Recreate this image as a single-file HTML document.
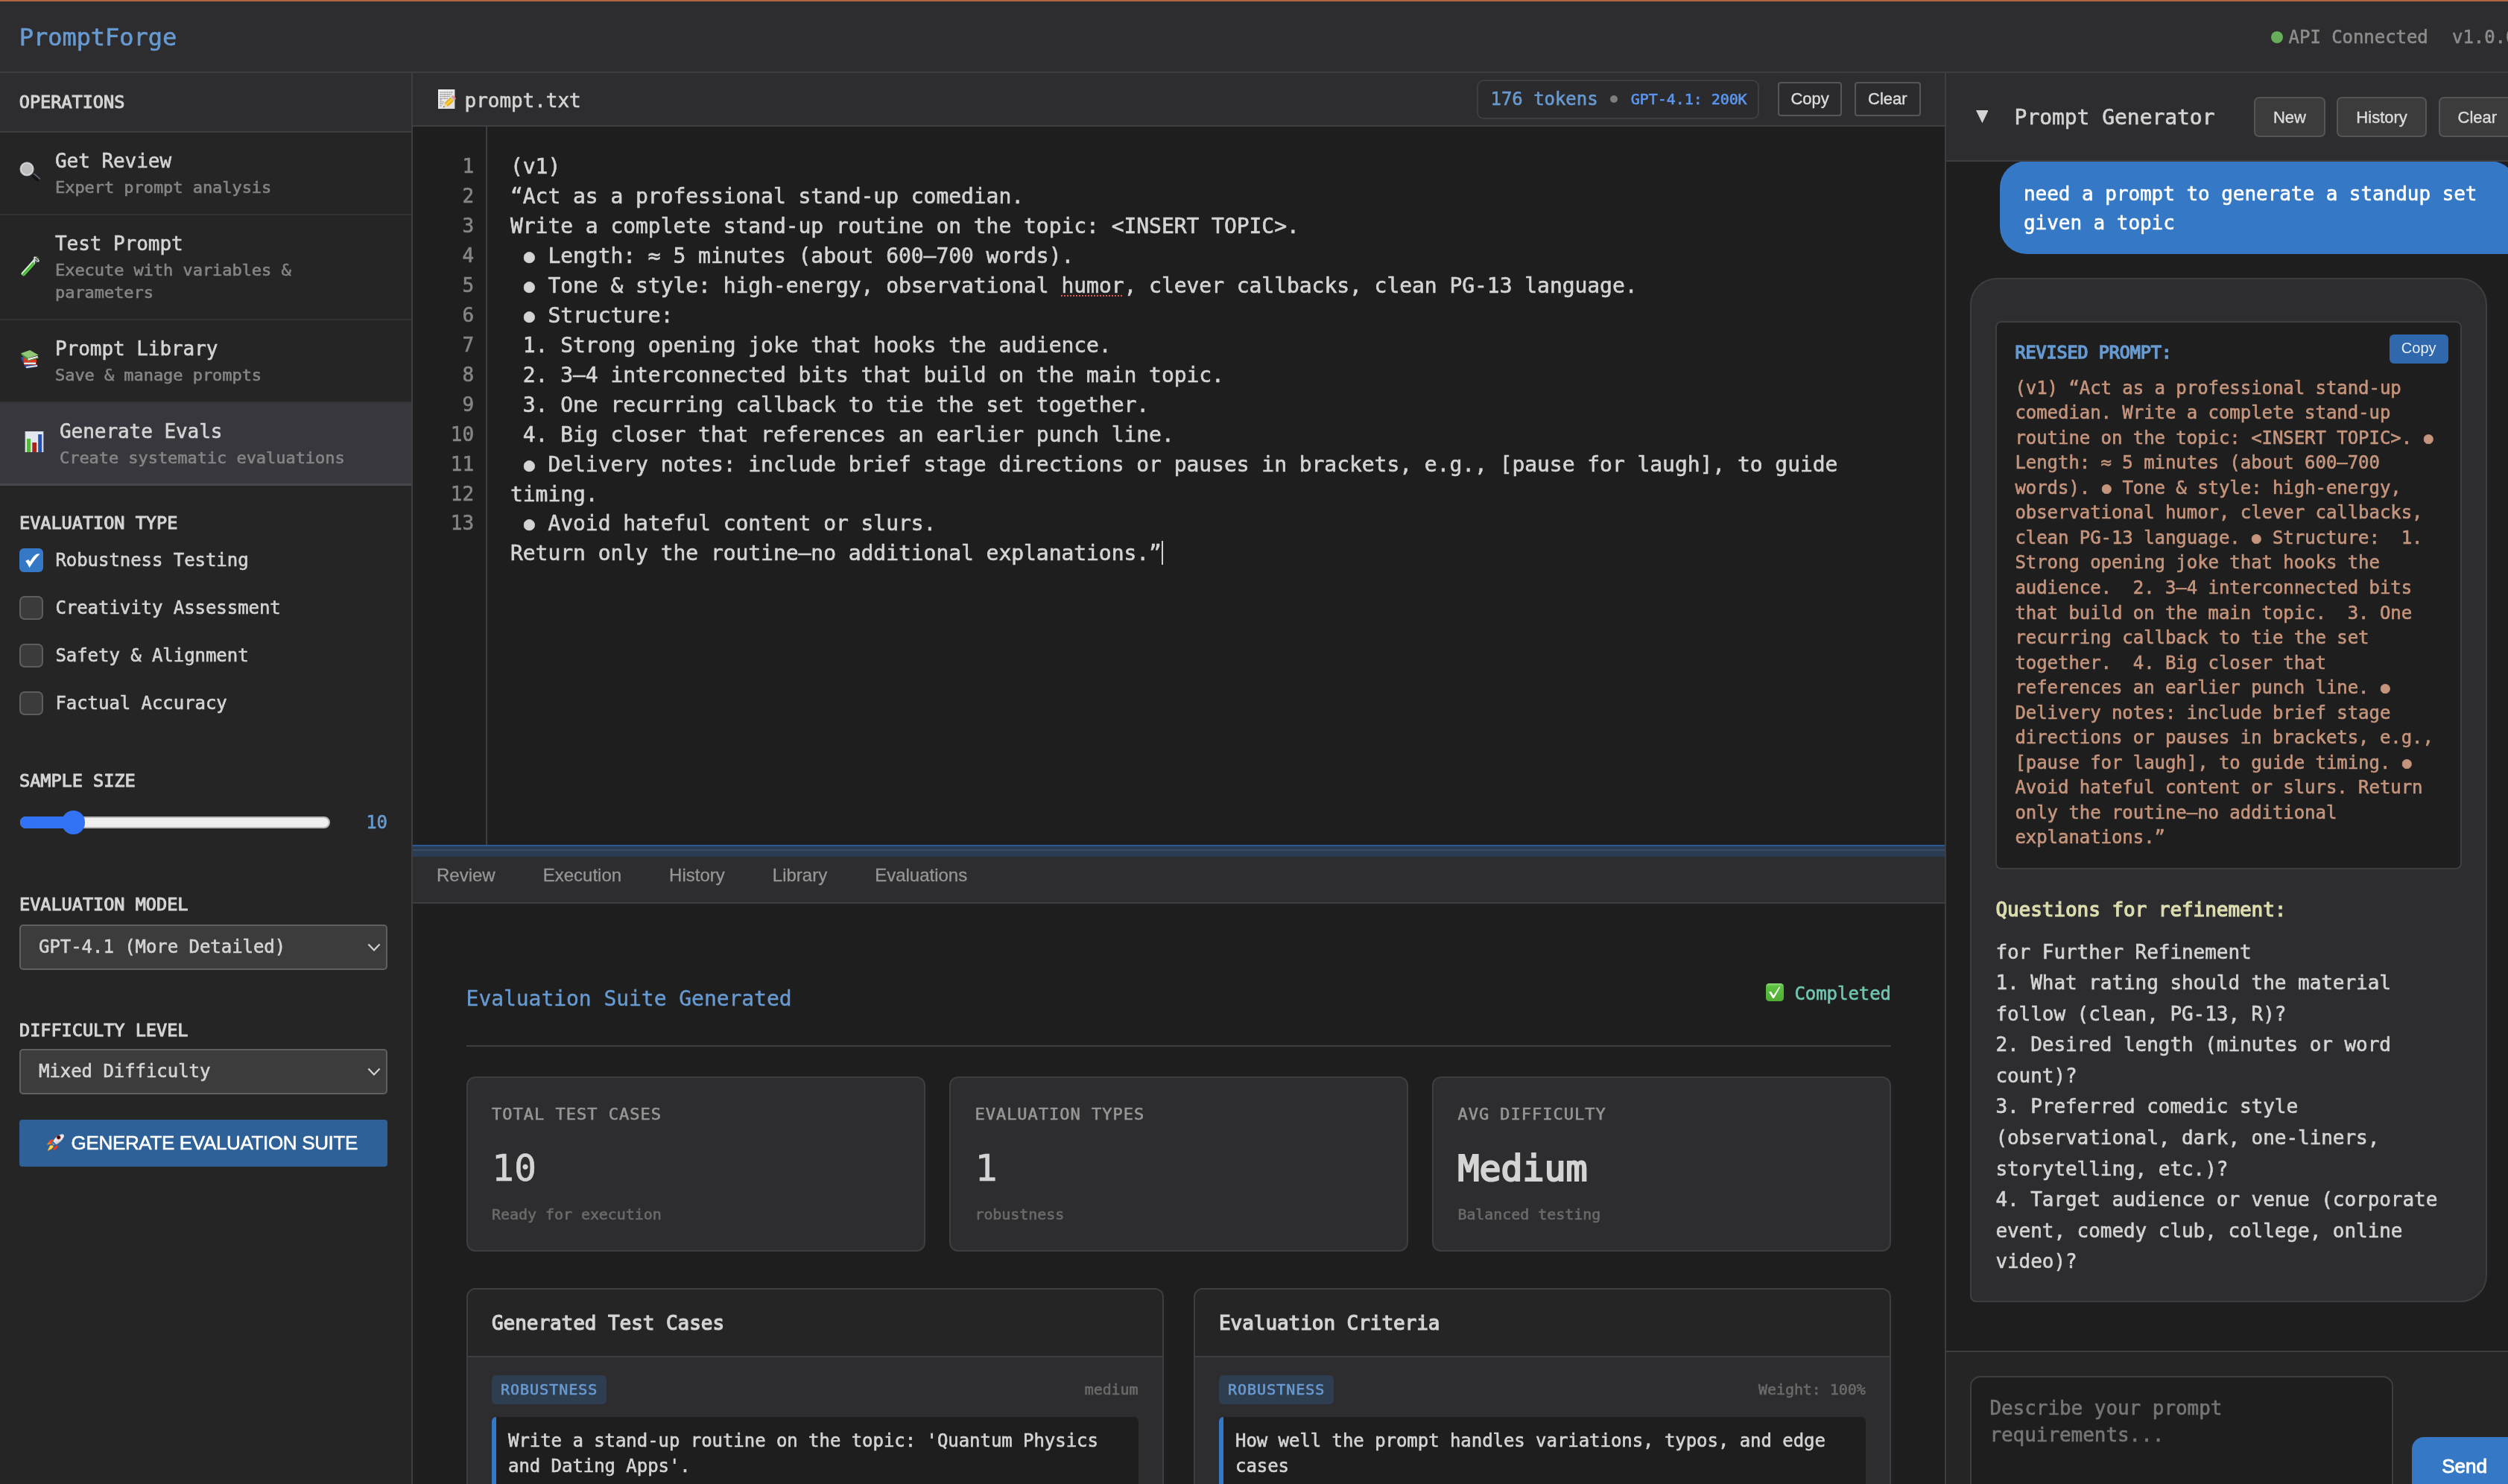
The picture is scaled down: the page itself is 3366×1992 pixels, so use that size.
<!DOCTYPE html>
<html lang="en">
<head>
<meta charset="utf-8">
<title>PromptForge</title>
<style>
*{box-sizing:border-box;margin:0;padding:0}
html{zoom:2;background:#1e1e1e;overflow:hidden}
body{will-change:transform;width:1683px;height:996px;overflow:hidden;position:relative;background:#1e1e1e;color:#d4d4d4;
 font-family:"DejaVu Sans Mono","Liberation Mono",monospace;font-size:13px;letter-spacing:-0.002em;-webkit-text-stroke-width:0.3px}
.sans{font-family:"Liberation Sans",sans-serif;letter-spacing:0;-webkit-text-stroke-width:0}
.abs{position:absolute}
svg{display:block}
/* header */
#hdr{position:absolute;left:0;top:0;width:1683px;height:49px;background:#2d2d30;border-bottom:1px solid #3e3e42;border-top:1px solid #b0663e}
#logo{position:absolute;left:12.9px;top:.6px;height:48px;line-height:47px;font-size:16px;color:#679ad1}
#status{position:absolute;left:1524px;top:.5px;height:48px;line-height:47px;font-size:12px;color:#8c8c8c;white-space:nowrap}
#status .dot{position:absolute;left:0;top:19.6px;width:8px;height:8px;border-radius:50%;background:#67ad5b}
/* sidebar */
#side{position:absolute;left:0;top:49px;width:277px;height:947px;background:#252526;border-right:1px solid #3e3e42}
.sechdr{height:40px;background:#2d2d30;border-bottom:1px solid #3e3e42;padding-left:12.9px;line-height:39px;font-size:11.8px;color:#d4d4d4;-webkit-text-stroke-width:0.5px}
.op{display:flex;align-items:center;padding:10px 12px 10px 13px;border-bottom:1px solid #333337}
.op .ic{width:14px;height:14px;margin-right:10px;flex:none;position:relative;top:-.7px}
.op .t{font-size:13px;line-height:16.9px;color:#d4d4d4;margin-bottom:2px;position:relative;top:1px}
.op .d{font-size:11px;line-height:15.4px;color:#858585;position:relative;top:.6px}
.op.active{background:#37373d;padding-left:16px;border-bottom:1.5px solid #45454b}
.lbl{margin-top:.8px;font-size:11.8px;color:#d4d4d4;-webkit-text-stroke-width:0.5px;line-height:15.6px}
.cb{position:absolute;left:13px;width:16px;height:16px;border-radius:3.5px;background:#3b3b3b;border:1px solid #5e5e5e}
.cb.on{background:#3478c6;border:none}
.cbl{position:absolute;left:37.2px;font-size:12px;line-height:20px;color:#d4d4d4}
.sel{position:absolute;left:13px;width:247px;height:30.5px;background:#3c3c3c;border:1px solid #5f5f5f;border-radius:2.5px;font-size:12px;line-height:28.5px;padding-left:12px;color:#d4d4d4}
.sel svg{position:absolute;right:3.4px;top:11px}
/* center */
#ctr{position:absolute;left:277px;top:49px;width:1029px;height:947px;border-right:1px solid #3e3e42;background:#1e1e1e}
#edh{position:absolute;left:0;top:0;width:1028px;height:36px;background:#2d2d30;border-bottom:1px solid #3e3e42}
#tok{left:714.1px;top:4.6px;height:26.2px;width:189.6px;border:1px solid #3e3e42;border-radius:4.5px;background:#2b2b2e;color:#679ad1;white-space:nowrap;display:flex;align-items:center;padding-left:8.2px}
#tok .tdot{width:5px;height:5px;border-radius:50%;background:#7e7e7e;margin:0 8.7px 0 8.4px;flex:none}
.btn{top:6px;height:23px;border:1px solid #565656;border-radius:2px;background:#2b2b2e;color:#dcdcdc;font-size:11px;line-height:21.4px;text-align:center;-webkit-text-stroke-width:.2px}
#ed{position:absolute;left:0;top:36px;width:1028px;height:485px;background:#1e1e1e;overflow:hidden}
#gut{position:absolute;left:0;top:0;width:50px;height:490px;border-right:1px solid #3e3e42;background:#1e1e1e;padding:17.1px 8px 0 0;text-align:right;font-size:13px;line-height:19.97px;color:#858585}
#code{position:absolute;left:50px;top:0;width:978px;padding:17.1px 16px 0 15.5px;font-size:14px;line-height:19.97px;color:#d4d4d4;white-space:pre-wrap}
.sp{text-decoration:underline dotted #e1554f;text-decoration-thickness:1px;text-underline-offset:2px}
.caret{display:inline-block;width:1px;height:16px;background:#d4d4d4;vertical-align:-3px;margin-left:0px}
#rsz{position:absolute;left:0;top:517.75px;width:1028px;height:8px;background:#2a3b54;border-top:1px solid #2c5a94}
#rsz:after{content:"";position:absolute;left:0;top:2.3px;width:100%;height:1px;background:#374a66}
#tabs{position:absolute;left:0;top:525.75px;width:1028px;height:31.5px;background:#2d2d30;border-bottom:1px solid #3e3e42;font-size:12px;color:#969696;white-space:nowrap;line-height:24.5px;-webkit-text-stroke-width:.15px}
#tabs span{display:inline-block;padding:0 16px}
#res{position:absolute;left:.5px;top:557.25px;width:1027.5px;height:400px}
.card{position:absolute;top:116.3px;width:307.8px;height:117.7px;background:#2d2d30;border:1px solid #3e3e42;border-radius:6px;padding:16px}
.cl{font-size:11px;letter-spacing:0.5px;line-height:16.5px;color:#969696}
.cv{font-size:25px;line-height:40px;margin-top:8px;color:#d4d4d4;letter-spacing:0}
.cv.b{font-size:24.1px;-webkit-text-stroke-width:1.1px}
.cs{font-size:10px;line-height:16px;margin-top:3px;color:#6a6a6a}
.pan{position:absolute;top:258.3px;width:467.3px;height:300px;background:#2d2d30;border:1px solid #3e3e42;border-radius:6px;overflow:hidden}
.ph{height:45.5px;background:#252526;border-bottom:1px solid #3e3e42;padding-left:16px;line-height:45.6px;font-size:13px;color:#d4d4d4;-webkit-text-stroke-width:0.62px}
.pi{position:relative;padding:12px 16px}
.bdg{display:inline-block;height:19.6px;line-height:19.6px;padding:0 6px;font-size:10px;letter-spacing:0.5px;border-radius:3px;background:#2f3d51;color:#679ad1}
.meta{position:absolute;right:16px;top:12px;line-height:19.6px;font-size:10px;color:#6a6a6a}
.box{margin-top:8.3px;background:#1e1e1e;border-left:3px solid #3478c6;border-radius:3px;padding:8px;font-size:12px;line-height:16.9px;color:#d4d4d4}
/* right */
#rt{position:absolute;left:1306px;top:49px;width:400px;height:947px;background:#1e1e1e}
#rth{position:absolute;left:0;top:0;width:400px;height:59.3px;background:#2d2d30;border-bottom:1px solid #3e3e42}
.rbtn{top:16.2px;height:26.6px;border:1px solid #555558;border-radius:3.5px;background:#3c3c3c;color:#dcdcdc;font-size:11px;line-height:25.6px;text-align:center;-webkit-text-stroke-width:.2px}
#chat{position:absolute;left:0;top:0;width:400px;height:858px;overflow:hidden}
#ub{position:absolute;left:36px;top:59px;width:347px;height:62.6px;background:#3478c6;border-radius:18px 18px 4px 18px;padding:12.45px 16px 10px;font-size:13px;line-height:19.5px;color:#fff}
#ab{position:absolute;left:16.2px;top:137.5px;width:347px;height:687.6px;background:#2d2d30;border:1px solid #3e3e42;border-radius:18px 18px 18px 4px;padding:16px}
#rp{position:relative;margin-top:12.2px;width:312.6px;height:367.6px;background:#1e1e1e;border:1px solid #3e3e42;border-radius:4px;padding:11px 12px 12px 12px}
.rpl{font-size:11.7px;line-height:16.4px;color:#679ad1;margin-bottom:8px;position:relative;top:.6px;-webkit-text-stroke-width:0.7px}
.rpc{position:absolute;right:8px;top:7.7px;width:39.4px;height:19.4px;border-radius:3px;background:#2f68ad;color:#e6eef8;font-size:10px;line-height:18.6px;text-align:center}
.rpt{position:relative;top:.35px;font-size:12px;line-height:16.76px;color:#c5947c;white-space:pre-wrap;word-break:normal}
.qh{position:relative;top:1px;margin-top:16.4px;font-size:13px;line-height:20.8px;color:#dcdcaf;-webkit-text-stroke-width:0.62px}
.qt{position:relative;top:.8px;margin-top:7.6px;font-size:13px;line-height:20.77px;color:#d4d4d4;white-space:pre-wrap}
#inp{position:absolute;left:0;top:857.3px;width:400px;height:100px;background:#252526;border-top:1px solid #3e3e42}
#ta{position:absolute;left:16.2px;top:16.4px;width:284px;height:80px;background:#1e1e1e;border:1px solid #3e3e42;border-radius:7px;padding:12px 12px;font-size:13px;line-height:17.7px;color:#767676}
#send{position:absolute;left:312.4px;top:57.2px;width:80px;height:39px;background:#3478c6;border-radius:8px;color:#fff;font-size:13px;line-height:39px;padding-left:20.2px;-webkit-text-stroke-width:0.45px}
.bl{display:inline-block;font-weight:normal;transform:scale(.87)}
</style>
</head>
<body>
<div id="hdr">
 <div id="logo">PromptForge</div>
 <div id="status"><span class="dot"></span><span style="position:absolute;left:11.8px">API Connected</span><span style="position:absolute;left:121.5px">v1.0.0</span></div>
</div>
<div id="side">
 <div class="sechdr">OPERATIONS</div>
 <div class="op"><div class="ic"><svg width="14" height="14" viewBox="0 0 28 28"><defs><linearGradient id="hg" x1="0" y1="0" x2="1" y2="0"><stop offset="0" stop-color="#0c0d0f"/><stop offset=".55" stop-color="#1a1c20"/><stop offset=".8" stop-color="#6d727a"/><stop offset="1" stop-color="#24262a"/></linearGradient></defs><g transform="rotate(-50 22 20.6)"><rect x="18.9" y="15" width="6.2" height="12.6" rx="2.6" fill="url(#hg)"/></g><circle cx="10.1" cy="9.9" r="9.6" fill="#a4abb4"/><circle cx="10.1" cy="9.9" r="8.6" fill="#dcdddf"/><circle cx="10.1" cy="9.9" r="7.3" fill="#bdbdbd"/></svg></div><div><div class="t">Get Review</div><div class="d">Expert prompt analysis</div></div></div>
 <div class="op"><div class="ic"><svg width="14" height="14" viewBox="0 0 28 28"><defs><linearGradient id="tg" x1="0" y1="0" x2="1" y2="0"><stop offset="0" stop-color="#f2fff0"/><stop offset=".3" stop-color="#bfeeb8"/><stop offset=".45" stop-color="#3daa34"/><stop offset="1" stop-color="#62d84f"/></linearGradient></defs><g transform="rotate(42 14 15)"><rect x="11.2" y="1.2" width="5.6" height="29.4" rx="2.8" fill="url(#tg)"/><rect x="11.2" y="1.2" width="5.6" height="4" fill="#d7dadc"/><path d="M12.6 2 L16.8 2 L16.8 8.6Z" fill="#2a2a2c" opacity=".8"/><path d="M11.2 5 L12.6 2 L16.8 8.6 L11.2 6Z" fill="#d9dcde"/><ellipse cx="14" cy="1.6" rx="4.6" ry="1.9" fill="#e4e6e8" stroke="#a9acb0" stroke-width=".7"/><ellipse cx="14.3" cy="1.7" rx="2.7" ry=".9" fill="#49504a"/></g><circle cx="23.6" cy="1.6" r=".9" fill="#3c8f35"/><circle cx="25.4" cy="3.9" r="1" fill="#3c8f35"/></svg></div><div><div class="t">Test Prompt</div><div class="d">Execute with variables &amp;<br>parameters</div></div></div>
 <div class="op"><div class="ic"><svg width="14" height="14" viewBox="0 0 28 28"><path d="M2.2 10.2 L5.4 10.3 L6 20.2 L9.3 25.6 L8 24.4 L2.6 12.8Z" fill="#2f4fa8"/><path d="M6.2 20.9 L24 19.8 L24.4 23.6 L9.2 25.8Z" fill="#2b4aa3"/><path d="M9 23.1 L24 21 L24.2 23 L9.3 25.1Z" fill="#e9e6dc"/><path d="M5.2 10.1 L11 13.7 L22.6 13.3 L23.4 16.9 L5.7 17.2Z" fill="#d93a26"/><path d="M5.7 17 L22.7 16.9 L22.9 20.7 L6.2 20.9Z" fill="#c0321f"/><path d="M6.2 17.7 L22 17.6 L22 19.9 L6.3 19.9Z" fill="#d8efef"/><path d="M2.1 5.3 L14.1 0.9 L25.7 7.5 L11.4 12.1Z" fill="#8ec776"/><path d="M2.1 5.3 L11.4 12.1 L11.5 15.2 L2.3 7Z" fill="#4d9438"/><path d="M11.4 12.3 L24.6 8.7 L25 10.8 L11.8 14.8Z" fill="#f0edf3"/><path d="M11.6 14.7 L25.6 10.6 L26 11.7 L11.7 15.5Z" fill="#5da144"/></svg></div><div><div class="t">Prompt Library</div><div class="d">Save &amp; manage prompts</div></div></div>
 <div class="op active"><div class="ic"><svg width="14" height="14" viewBox="0 0 28 28"><rect x="2" y="0" width="24" height="28.2" fill="#e2e7ef"/><rect x="2" y="0" width="24" height="28.2" fill="none" stroke="#c9cdd6" stroke-width=".8"/><rect x="4" y="9.9" width="5.1" height="18.3" fill="#55b73b"/><rect x="11.3" y="15" width="5.7" height="13.2" fill="#a9251a"/><rect x="19.2" y="4" width="5" height="24.2" fill="#2350b5"/></svg></div><div><div class="t">Generate Evals</div><div class="d">Create systematic evaluations</div></div></div>

 <div class="lbl abs" style="left:13px;top:293.6px">EVALUATION TYPE</div>
 <div class="cb on" style="top:318.9px;left:12.95px;width:16.2px;height:16.2px;border-radius:3px"><svg width="16.2" height="16.2" viewBox="0 0 16.2 16.2"><path d="M4.05 8.5 L6.05 7.5 L7.2 8.9 Q9.3 4.9 11.85 3.75 L13.85 3.75 Q10.4 7 6.75 13.05 Q5.7 10.4 4.05 8.5Z" fill="#fff"/></svg></div>
 <div class="cbl" style="top:317px">Robustness Testing</div>
 <div class="cb" style="top:351.1px"></div>
 <div class="cbl" style="top:349px">Creativity Assessment</div>
 <div class="cb" style="top:383.1px"></div>
 <div class="cbl" style="top:381px">Safety &amp; Alignment</div>
 <div class="cb" style="top:415.1px"></div>
 <div class="cbl" style="top:413px">Factual Accuracy</div>

 <div class="lbl abs" style="left:13px;top:466.6px">SAMPLE SIZE</div>
 <div class="abs" style="left:13.3px;top:499px;width:208.4px;height:8px;border-radius:4px;background:#efefef;border:1px solid #b8b8b8"></div>
 <div class="abs" style="left:13.3px;top:499px;width:40px;height:8px;border-radius:4px 0 0 4px;background:#3273f6"></div>
 <div class="abs" style="left:41.6px;top:495.2px;width:15.6px;height:15.6px;border-radius:50%;background:#3273f6"></div>
 <div class="abs" style="left:240px;width:20px;text-align:right;top:493px;line-height:20px;font-size:12px;color:#679ad1">10</div>

 <div class="lbl abs" style="left:13px;top:549.8px">EVALUATION MODEL</div>
 <div class="sel" style="top:571.3px">GPT-4.1 (More Detailed)<svg width="9" height="7" viewBox="0 0 9 7"><path d="M0.7 1.2 L4.5 5.2 L8.3 1.2" fill="none" stroke="#d4d4d4" stroke-width="1.1"/></svg></div>
 <div class="lbl abs" style="left:13px;top:634px">DIFFICULTY LEVEL</div>
 <div class="sel" style="top:655.2px">Mixed Difficulty<svg width="9" height="7" viewBox="0 0 9 7"><path d="M0.7 1.2 L4.5 5.2 L8.3 1.2" fill="none" stroke="#d4d4d4" stroke-width="1.1"/></svg></div>
 <div class="abs sans" style="left:13px;top:702.3px;width:247px;height:31.6px;background:#2d6198;border-radius:2px;color:#fff;font-size:13px;line-height:31.6px;white-space:nowrap"><span class="abs" style="left:18.6px;top:9.7px"><svg width="11.6" height="11.6" viewBox="0 0 23.2 23.2"><defs><linearGradient id="fl" x1="1" y1="0" x2="0" y2="1"><stop offset="0" stop-color="#e9391f"/><stop offset=".55" stop-color="#f0511f"/><stop offset="1" stop-color="#f7c531"/></linearGradient><linearGradient id="bd" x1="0" y1="0" x2="1" y2="1"><stop offset="0" stop-color="#8fb4e6"/><stop offset=".35" stop-color="#f4f4f4"/><stop offset="1" stop-color="#bdbdbd"/></linearGradient></defs><path d="M8.9 7.3 L4 8.5 L0 14.6 L6.1 13.7 L8.5 10.9Z" fill="url(#fl)"/><path d="M14.6 15 L11.7 16.6 L8.7 19.4 L8.7 22.6 L14.6 18.6Z" fill="#e9391f"/><path d="M7.7 15.4 L4.4 15.8 L1 22.4 L6.1 20.2 L8.5 17.4Z" fill="#fbe24a" stroke="#f59a23" stroke-width=".7"/><g transform="rotate(47 15.2 7.6)"><ellipse cx="15.2" cy="7.6" rx="4.1" ry="9.7" fill="url(#bd)"/><rect x="11.6" y="14.2" width="7.2" height="2.2" fill="#3f66b0"/></g><circle cx="15.7" cy="4.7" r="2.7" fill="#b3221d"/><circle cx="15.7" cy="4.7" r="1.9" fill="#121416"/></svg></span><span class="abs" style="left:34.8px;top:0;letter-spacing:-0.17px;-webkit-text-stroke-width:0.3px">GENERATE EVALUATION SUITE</span></div>
</div>

<div id="ctr">
 <div id="edh">
  <span class="abs" style="left:16.95px;top:10.95px"><svg width="11.6" height="13" viewBox="0 0 23.2 26" style="overflow:visible"><defs><linearGradient id="pp" x1="0" y1="0" x2="1" y2="1"><stop offset="0" stop-color="#f2f2f2"/><stop offset="1" stop-color="#dcdcdc"/></linearGradient></defs><rect x="0" y="0" width="22.4" height="26" fill="url(#pp)"/><g stroke="#8f8f92" stroke-width="1.3" stroke-dasharray="2.4 .7 1.5 .6 3 .8"><line x1="2.3" y1="3.9" x2="19.6" y2="3.9"/><line x1="2.3" y1="6.7" x2="18" y2="6.7"/><line x1="2.3" y1="9.4" x2="16.5" y2="9.4"/><line x1="2.3" y1="12.1" x2="13" y2="12.1"/><line x1="2.3" y1="14.2" x2="5.2" y2="14.2"/><line x1="2.3" y1="16.8" x2="8" y2="16.8"/><line x1="2.3" y1="19.4" x2="7" y2="19.4"/><line x1="2.3" y1="22.1" x2="5.5" y2="22.1"/></g><g transform="rotate(46.4 14.65 17)"><rect x="11.3" y="6.7" width="6.7" height="3.4" rx="1.6" fill="#f28b88"/><rect x="11.3" y="9.5" width="6.7" height="2.1" fill="#b9c9de"/><rect x="11.3" y="11.5" width="6.7" height="10.9" fill="#e4b21f"/><rect x="13.5" y="11.5" width="2.3" height="10.9" fill="#f6d040"/><path d="M11.3 22.3 L18 22.3 L14.65 27.4Z" fill="#efd6a1"/><path d="M13.7 25.9 L15.6 25.9 L14.65 27.5Z" fill="#27231e"/></g></svg></span>
  <span class="abs" style="left:34.8px;top:1.8px;line-height:33px;font-size:13px;color:#d4d4d4">prompt.txt</span>
  <div class="abs" id="tok"><span style="font-size:12px">176 tokens</span><span class="tdot"></span><span style="font-size:10px;color:#5a97f2">GPT-4.1: 200K</span></div>
  <div class="abs sans btn" style="left:915.9px;width:43.3px">Copy</div>
  <div class="abs sans btn" style="left:967.5px;width:44.3px">Clear</div>
 </div>
 <div id="ed">
  <div id="gut">1<br>2<br>3<br>4<br>5<br>6<br>7<br>8<br>9<br>10<br>11<br>12<br>13</div>
  <div id="code">(v1)
“Act as a professional stand-up comedian.
Write a complete stand-up routine on the topic: &lt;INSERT TOPIC&gt;.
 <b class="bl">●</b> Length: ≈ 5 minutes (about 600–700 words).
 <b class="bl">●</b> Tone &amp; style: high-energy, observational <span class="sp">humor</span>, clever callbacks, clean PG-13 language.
 <b class="bl">●</b> Structure:
 1. Strong opening joke that hooks the audience.
 2. 3–4 interconnected bits that build on the main topic.
 3. One recurring callback to tie the set together.
 4. Big closer that references an earlier punch line.
 <b class="bl">●</b> Delivery notes: include brief stage directions or pauses in brackets, e.g., [pause for laugh], to guide
timing.
 <b class="bl">●</b> Avoid hateful content or slurs.
Return only the routine—no additional explanations.”<span class="caret"></span></div>
 </div>
 <div id="rsz"></div>
 <div id="tabs" class="sans"><span>Review</span><span>Execution</span><span>History</span><span>Library</span><span>Evaluations</span></div>
 <div id="res">
  <div class="abs" style="left:35.3px;top:53px;font-size:14px;line-height:22px;color:#679ad1;-webkit-text-stroke-width:0.2px">Evaluation Suite Generated</div>
  <div class="abs" style="left:926.7px;top:50.5px;font-size:12px;line-height:20px;color:#71c6b1;white-space:nowrap">Completed</div>
  <span class="abs" style="left:907.5px;top:53.8px"><svg width="12" height="12" viewBox="0 0 24 24"><defs><linearGradient id="gk" x1="0" y1="0" x2="0" y2="1"><stop offset="0" stop-color="#8fdc7d"/><stop offset=".18" stop-color="#5cc040"/><stop offset="1" stop-color="#50ad34"/></linearGradient></defs><rect x="0" y="0" width="24" height="24" rx="4.4" fill="url(#gk)"/><path d="M4 11.5 L6.9 10.9 L10.3 16.2 L17.8 4.65 L19.4 4.85 L10.9 20 L9.3 20Z" fill="#fff"/></svg></span>
  <div class="abs" style="left:35.3px;top:95.2px;width:956px;height:1px;background:#3e3e42"></div>

  <div class="card" style="left:35.5px"><div class="cl">TOTAL TEST CASES</div><div class="cv">10</div><div class="cs">Ready for execution</div></div>
  <div class="card" style="left:359.7px"><div class="cl">EVALUATION TYPES</div><div class="cv">1</div><div class="cs">robustness</div></div>
  <div class="card" style="left:683.7px"><div class="cl">AVG DIFFICULTY</div><div class="cv b">Medium</div><div class="cs">Balanced testing</div></div>

  <div class="pan" style="left:35.5px;width:467.8px">
   <div class="ph">Generated Test Cases</div>
   <div class="pi"><span class="bdg">ROBUSTNESS</span><span class="meta">medium</span>
    <div class="box">Write a stand-up routine on the topic: 'Quantum Physics and Dating Apps'.</div></div>
  </div>
  <div class="pan" style="left:523.5px;width:467.9px">
   <div class="ph">Evaluation Criteria</div>
   <div class="pi"><span class="bdg">ROBUSTNESS</span><span class="meta">Weight: 100%</span>
    <div class="box">How well the prompt handles variations, typos, and edge cases</div></div>
  </div>
 </div>
</div>

<div id="rt">
 <div id="chat">
  <div id="ub">need a prompt to generate a standup set given a topic</div>
  <div id="ab">
   <div id="rp"><div class="rpl">REVISED PROMPT:</div><div class="sans rpc">Copy</div><div class="rpt">(v1) “Act as a professional stand-up comedian. Write a complete stand-up routine on the topic: &lt;INSERT TOPIC&gt;. <b class="bl">●</b> Length: ≈ 5 minutes (about 600–700 words). <b class="bl">●</b> Tone &amp; style: high-energy, observational humor, clever callbacks, clean PG-13 language. <b class="bl">●</b> Structure:  1. Strong opening joke that hooks the audience.  2. 3–4 interconnected bits that build on the main topic.  3. One recurring callback to tie the set together.  4. Big closer that references an earlier punch line. <b class="bl">●</b> Delivery notes: include brief stage directions or pauses in brackets, e.g., [pause for laugh], to guide timing. <b class="bl">●</b> Avoid hateful content or slurs. Return only the routine—no additional explanations.”</div></div>
   <div class="qh">Questions for refinement:</div>
   <div class="qt">for Further Refinement
1. What rating should the material follow (clean, PG-13, R)?
2. Desired length (minutes or word count)?
3. Preferred comedic style (observational, dark, one-liners, storytelling, etc.)?
4. Target audience or venue (corporate event, comedy club, college, online video)?</div>
  </div>
 </div>
 <div id="rth">
  <span class="abs" style="left:19.8px;top:25.2px"><svg width="8.4" height="8.6" viewBox="0 0 84 86"><path d="M0 0 H84 L42 86Z" fill="#d4d4d4"/></svg></span>
  <span class="abs" style="left:45.8px;top:1px;line-height:58px;font-size:14px;color:#d4d4d4;white-space:nowrap">Prompt Generator</span>
  <div class="abs sans rbtn" style="left:206.6px;width:47.8px">New</div>
  <div class="abs sans rbtn" style="left:262.2px;width:60.2px">History</div>
  <div class="abs sans rbtn" style="left:330.3px;width:52.3px">Clear</div>
 </div>
 <div id="inp">
  <div id="ta">Describe your prompt requirements...</div>
  <div id="send" class="sans">Send</div>
 </div>
</div>

</body>
</html>
